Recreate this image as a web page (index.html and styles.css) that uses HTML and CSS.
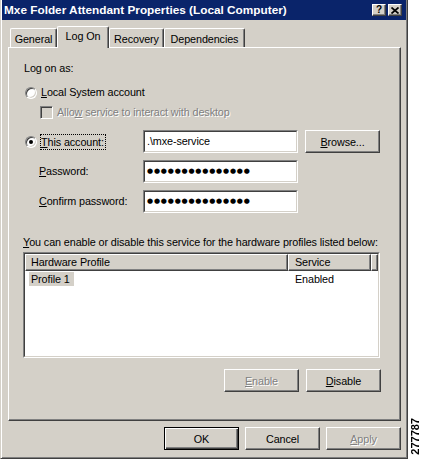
FILE: index.html
```html
<!DOCTYPE html>
<html>
<head>
<meta charset="utf-8">
<link rel="stylesheet" href="styles.css">
</head>
<body>
<div class="page">
  <div class="window">
    <div class="titlebar">
      <span class="title">Mxe Folder Attendant Properties (Local Computer)</span>
      <div class="caption-btns">
        <span class="cbtn help">?</span>
        <span class="cbtn close"><svg width="8" height="7" viewBox="0 0 8 7"><path d="M0.5 0.5 L7.5 6.5 M7.5 0.5 L0.5 6.5" stroke="#000" stroke-width="1.7" fill="none"/></svg></span>
      </div>
    </div>
    <div class="client">
      <div class="tabs">
        <div class="tab t-general">General</div>
        <div class="tab t-logon active">Log On</div>
        <div class="tab t-recovery">Recovery</div>
        <div class="tab t-deps">Dependencies</div>
      </div>
      <div class="panel">
        <div class="heading">Log on as:</div>
        <div class="row r-local"><span class="radio"></span><span class="lbl"><u>L</u>ocal System account</span></div>
        <div class="row r-allow"><span class="check"></span><span class="lbl dis">Allo<u>w</u> service to interact with desktop</span></div>
        <div class="row r-field r-account">
          <div class="lead"><span class="radio checked"></span><span class="lbl focus"><u>T</u>his account:</span></div>
          <div class="field"><div class="field-in">.\mxe-service</div></div>
          <button class="btn browse"><u>B</u>rowse...</button>
        </div>
        <div class="row r-field r-pw">
          <div class="lead"><span class="lbl ind"><u>P</u>assword:</span></div>
          <div class="field"><div class="field-in"><span class="dots">&#9679;&#9679;&#9679;&#9679;&#9679;&#9679;&#9679;&#9679;&#9679;&#9679;&#9679;&#9679;&#9679;&#9679;&#9679;</span></div></div>
        </div>
        <div class="row r-field r-pw">
          <div class="lead"><span class="lbl ind"><u>C</u>onfirm password:</span></div>
          <div class="field"><div class="field-in"><span class="dots">&#9679;&#9679;&#9679;&#9679;&#9679;&#9679;&#9679;&#9679;&#9679;&#9679;&#9679;&#9679;&#9679;&#9679;&#9679;</span></div></div>
        </div>
        <div class="note"><u>Y</u>ou can enable or disable this service for the hardware profiles listed below:</div>
        <div class="listview">
          <div class="lv-inner">
            <div class="lv-head">
              <div class="hcell c1">Hardware Profile</div>
              <div class="hcell c2">Service</div>
              <div class="hcell c3"></div>
            </div>
            <div class="lv-row">
              <div class="cell c1"><span class="sel">Profile 1</span></div>
              <div class="cell c2">Enabled</div>
            </div>
          </div>
        </div>
        <div class="panel-btns">
          <button class="btn" disabled><span class="dis"><u>E</u>nable</span></button>
          <button class="btn"><u>D</u>isable</button>
        </div>
      </div>
      <div class="footer">
        <button class="btn default">OK</button>
        <button class="btn">Cancel</button>
        <button class="btn" disabled><span class="dis"><u>A</u>pply</span></button>
      </div>
    </div>
  </div>
  <div class="figno">277787</div>
</div>
</body>
</html>
```
FILE: styles.css
```css
body {
  margin: 0;
  background: #fff;
  font-family: "Liberation Sans", Arial, sans-serif;
  font-size: 10.8px;
  letter-spacing: -0.1px;
  line-height: 13px;
  color: #000;
}
.page {
  display: flex;
  width: 423px;
  height: 460px;
}
.window {
  width: 408px;
  height: 459px;
  flex-shrink: 0;
  box-sizing: border-box;
  background: #d4d0c8;
  border: 1px solid #404040;
  border-top: 0;
  border-left-color: #d4d0c8;
  box-shadow: inset 1px 0 #fff, inset -1px -1px #808080;
  padding: 0 1px 1px;
  display: flex;
  flex-direction: column;
}
.titlebar {
  height: 20px;
  background: #0a246a;
  display: flex;
  align-items: center;
  padding: 0 4px 0 2px;
  color: #fff;
}
.title {
  flex: 1;
  font-weight: bold;
  font-size: 11.8px;
  letter-spacing: 0;
  white-space: nowrap;
  padding-top: 1px;
}
.caption-btns {
  display: flex;
  gap: 2px;
}
.cbtn {
  width: 14px;
  height: 12px;
  box-sizing: border-box;
  background: #d4d0c8;
  border: 1px solid;
  border-color: #fff #404040 #404040 #fff;
  box-shadow: inset -1px -1px #808080;
  display: flex;
  align-items: center;
  justify-content: center;
  color: #000;
  font-weight: bold;
  font-size: 10px;
  line-height: 10px;
}
.client {
  flex: 1;
  padding: 6px 5px 0 6px;
  display: flex;
  flex-direction: column;
}
.tabs {
  display: flex;
  align-items: flex-end;
  height: 21px;
  padding-left: 2px;
}
.tab {
  height: 19px;
  box-sizing: border-box;
  border-top: 1px solid #fff;
  border-left: 1px solid #fff;
  border-right: 1px solid #404040;
  box-shadow: inset -1px 0 #808080;
  border-radius: 2px 2px 0 0;
  display: flex;
  justify-content: center;
  align-items: center;
  padding-top: 2px;
}
.tab.active {
  height: 22px;
  margin-bottom: -1px;
  background: #d4d0c8;
  position: relative;
  z-index: 1;
  padding-top: 0;
  padding-bottom: 3px;
}
.t-general { width: 47px; }
.t-logon { width: 52px; }
.t-recovery { width: 55px; }
.t-deps { width: 81px; }

.panel {
  height: 374px;
  box-sizing: border-box;
  border: 1px solid;
  border-color: #fff #404040 #404040 #fff;
  box-shadow: inset -1px -1px #808080;
  padding: 14px 19px 0 14px;
  display: flex;
  flex-direction: column;
}
.heading {
  padding-left: 1px;
}
.row {
  display: flex;
  align-items: center;
}
.r-local {
  margin-top: 11px;
  height: 13px;
  margin-left: 2px;
}
.r-allow {
  margin-top: 7px;
  height: 13px;
  margin-left: 17px;
}
.r-field {
  height: 23px;
  margin-left: 2px;
}
.r-account { margin-top: 11px; }
.r-pw { margin-top: 7px; }
.lead {
  width: 118px;
  display: flex;
  align-items: center;
}
.radio {
  width: 12px;
  height: 12px;
  box-sizing: border-box;
  border-radius: 50%;
  border: 1px solid;
  border-color: #808080 #fff #fff #808080;
  background: #fff;
  box-shadow: inset 1px 1px #404040, inset -1px -1px #d4d0c8;
  display: flex;
  align-items: center;
  justify-content: center;
  margin-right: 4px;
  flex-shrink: 0;
}
.radio.checked {
  margin-right: 3px;
}
.radio.checked::after {
  content: "";
  width: 4px;
  height: 4px;
  border-radius: 50%;
  background: #000;
}
.check {
  width: 13px;
  height: 13px;
  box-sizing: border-box;
  border: 1px solid;
  border-color: #808080 #fff #fff #808080;
  background: #d4d0c8;
  box-shadow: inset 1px 1px #404040, inset -1px -1px #d4d0c8;
  margin-right: 4px;
}
.dis {
  color: #808080;
  text-shadow: 1px 1px #fff;
}
.lbl.focus {
  border: 1px dotted #000;
  padding: 1px 1px 0 0;
}
.lbl.ind {
  padding-left: 14px;
}
.field {
  width: 155px;
  height: 23px;
  box-sizing: border-box;
  border: 1px solid;
  border-color: #808080 #fff #fff #808080;
}
.field-in {
  height: 100%;
  box-sizing: border-box;
  border: 1px solid;
  border-color: #404040 #d4d0c8 #d4d0c8 #404040;
  background: #fff;
  padding-left: 2px;
  display: flex;
  align-items: center;
}
.dots {
  font-family: "DejaVu Sans", sans-serif;
  font-size: 7px;
  letter-spacing: 0.8px;
}
.btn {
  width: 75px;
  height: 23px;
  box-sizing: border-box;
  background: #d4d0c8;
  border: 1px solid;
  border-color: #fff #404040 #404040 #fff;
  box-shadow: inset -1px -1px #808080;
  font-family: "Liberation Sans", Arial, sans-serif;
  font-size: 10.8px;
  letter-spacing: -0.1px;
  color: #000;
  padding: 0;
  margin: 0;
}
.btn.default {
  border-color: #000;
  box-shadow: inset 1px 1px #fff, inset -1px -1px #404040, inset -2px -2px #808080;
}
.browse {
  margin-left: 7px;
}
.note {
  margin-top: 23px;
  white-space: nowrap;
}
.listview {
  margin-top: 3px;
  width: 357px;
  height: 106px;
  box-sizing: border-box;
  border: 1px solid;
  border-color: #808080 #fff #fff #808080;
}
.lv-inner {
  height: 100%;
  box-sizing: border-box;
  border: 1px solid;
  border-color: #404040 #d4d0c8 #d4d0c8 #404040;
  background: #fff;
}
.lv-head {
  display: flex;
  height: 17px;
}
.hcell {
  height: 17px;
  box-sizing: border-box;
  background: #d4d0c8;
  border-top: 1px solid #fff;
  border-left: 1px solid #fff;
  border-right: 1px solid #404040;
  border-bottom: 1px solid #404040;
  box-shadow: inset -1px -1px #808080;
  padding-left: 5px;
  line-height: 14px;
}
.c1 { width: 263px; }
.hcell.c2 { width: 83px; padding-left: 6px; }
.hcell.c3 { flex: 1; }
.lv-row {
  display: flex;
  height: 14px;
  margin-top: 1px;
  line-height: 14px;
}
.cell.c1 { padding-left: 4px; box-sizing: border-box; }
.cell.c2 { padding-left: 7px; }
.sel {
  display: inline-block;
  background: #d4d0c8;
  padding: 0 4px 0 2px;
}
.panel-btns {
  margin-top: 11px;
  display: flex;
  justify-content: flex-end;
  gap: 7px;
}
.footer {
  display: flex;
  justify-content: flex-end;
  gap: 6px;
  margin-top: 6px;
}
.figno {
  writing-mode: vertical-rl;
  transform: rotate(180deg);
  font-weight: bold;
  font-size: 11px;
  letter-spacing: 0;
  line-height: 12px;
  align-self: flex-end;
  margin: 0 0 5px 1px;
}
```
